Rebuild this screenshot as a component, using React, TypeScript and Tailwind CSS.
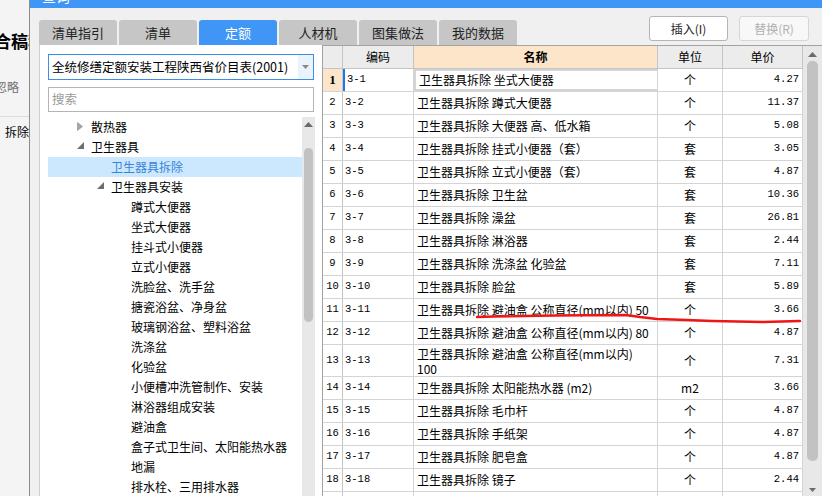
import React from 'react';

type Row = { code: string; name: React.ReactNode; unit: string; price: string; tall?: boolean };

const rows: Row[] = [
  { code: '3-1', name: '卫生器具拆除 坐式大便器', unit: '个', price: '4.27' },
  { code: '3-2', name: '卫生器具拆除 蹲式大便器', unit: '个', price: '11.37' },
  { code: '3-3', name: '卫生器具拆除 大便器 高、低水箱', unit: '个', price: '5.08' },
  { code: '3-4', name: '卫生器具拆除 挂式小便器（套）', unit: '套', price: '3.05' },
  { code: '3-5', name: '卫生器具拆除 立式小便器（套）', unit: '套', price: '4.87' },
  { code: '3-6', name: '卫生器具拆除 卫生盆', unit: '套', price: '10.36' },
  { code: '3-7', name: '卫生器具拆除 澡盆', unit: '套', price: '26.81' },
  { code: '3-8', name: '卫生器具拆除 淋浴器', unit: '套', price: '2.44' },
  { code: '3-9', name: '卫生器具拆除 洗涤盆 化验盆', unit: '套', price: '7.11' },
  { code: '3-10', name: '卫生器具拆除 脸盆', unit: '套', price: '5.89' },
  { code: '3-11', name: '卫生器具拆除 避油盒 公称直径(mm以内) 50', unit: '个', price: '3.66' },
  { code: '3-12', name: '卫生器具拆除 避油盒 公称直径(mm以内) 80', unit: '个', price: '4.87' },
  {
    code: '3-13',
    name: (
      <>
        卫生器具拆除 避油盒 公称直径(mm以内)
        <br />
        100
      </>
    ),
    unit: '个',
    price: '7.31',
    tall: true,
  },
  { code: '3-14', name: '卫生器具拆除 太阳能热水器 (m2)', unit: 'm2', price: '3.66' },
  { code: '3-15', name: '卫生器具拆除 毛巾杆', unit: '个', price: '4.87' },
  { code: '3-16', name: '卫生器具拆除 手纸架', unit: '个', price: '4.87' },
  { code: '3-17', name: '卫生器具拆除 肥皂盒', unit: '个', price: '4.87' },
  { code: '3-18', name: '卫生器具拆除 镜子', unit: '个', price: '2.44' },
  { code: '', name: '', unit: '', price: '' },
];

type TreeItem = { label: string; level: 0 | 1 | 2; arrow?: 'closed' | 'open'; selected?: boolean };

const tree: TreeItem[] = [
  { label: '散热器', level: 0, arrow: 'closed' },
  { label: '卫生器具', level: 0, arrow: 'open' },
  { label: '卫生器具拆除', level: 1, selected: true },
  { label: '卫生器具安装', level: 1, arrow: 'open' },
  { label: '蹲式大便器', level: 2 },
  { label: '坐式大便器', level: 2 },
  { label: '挂斗式小便器', level: 2 },
  { label: '立式小便器', level: 2 },
  { label: '洗脸盆、洗手盆', level: 2 },
  { label: '搪瓷浴盆、净身盆', level: 2 },
  { label: '玻璃钢浴盆、塑料浴盆', level: 2 },
  { label: '洗涤盆', level: 2 },
  { label: '化验盆', level: 2 },
  { label: '小便槽冲洗管制作、安装', level: 2 },
  { label: '淋浴器组成安装', level: 2 },
  { label: '避油盒', level: 2 },
  { label: '盒子式卫生间、太阳能热水器', level: 2 },
  { label: '地漏', level: 2 },
  { label: '排水栓、三用排水器', level: 2 },
];

const tabs = ['清单指引', '清单', '定额', '人材机', '图集做法', '我的数据'];

const UpArrow = () => (
  <svg width="9" height="5" viewBox="0 0 9 5">
    <path d="M0 5 L4.5 0 L9 5 Z" fill="#6b6b6b" />
  </svg>
);

const DownArrow = ({ color = '#6b6b6b' }: { color?: string }) => (
  <svg width="7" height="4" viewBox="0 0 7 4">
    <path d="M0 0 L7 0 L3.5 4 Z" fill={color} />
  </svg>
);

const TreeArrow = ({ kind }: { kind: 'closed' | 'open' }) =>
  kind === 'closed' ? (
    <svg width="6" height="9" viewBox="0 0 6 9">
      <path d="M0.5 0.5 L5.5 4.5 L0.5 8.5 Z" fill="#a6a6a6" stroke="#8a8a8a" strokeWidth="0.6" />
    </svg>
  ) : (
    <svg width="7" height="7" viewBox="0 0 7 7">
      <path d="M7 0 L7 7 L0 7 Z" fill="#6e6e6e" />
    </svg>
  );

const BackPage = () => (
  <div className="flex w-[29px] shrink-0 flex-col overflow-hidden">
    <div className="mt-[31px] -ml-[6px] whitespace-nowrap text-[17px] font-bold leading-[20px]">合稿程</div>
    <div className="mt-[29px] -ml-[5px] whitespace-nowrap text-[12px] leading-[14px] text-[#707070]">忽略</div>
    <div className="mt-[22px] flex-1 border-t border-[#dcdcdc]">
      <div className="mt-[8px] flex items-center whitespace-nowrap">
        <span className="-ml-[7px] h-[10px] w-[10px] border border-[#444]" />
        <span className="ml-[6px] text-[12px] leading-[14px]">拆除</span>
      </div>
    </div>
  </div>
);

export default function App() {
  return (
    <div className="relative flex h-[496px] w-[822px] overflow-hidden bg-[#f4f4f4] font-['Noto_Sans_CJK_SC',sans-serif] text-[12px] text-black">
      <BackPage />
      <div className="w-px shrink-0 bg-[#8c8c8c]" />
      <div className="flex min-w-0 flex-1 flex-col bg-[#f0f0f0]">
        {/* title bar, mostly scrolled off the top */}
        <div className="h-[8px] shrink-0 overflow-hidden bg-[#3f96f6]">
          <div className="-mt-[12px] ml-[12px] text-[14px] leading-[16px] text-white">查询</div>
        </div>

        {/* tabs + buttons */}
        <div className="flex h-[37px] shrink-0 pl-[9px]">
          <div className="flex items-end gap-[2px]">
            {tabs.map((t) => (
              <div
                key={t}
                className={`flex h-[25px] w-[78px] items-center justify-center rounded-t-[3px] text-[13px] leading-[16px] ${
                  t === '定额' ? 'bg-[#3f96f6] text-white' : 'bg-[#c6c6c6] text-[#222]'
                }`}
              >
                {t}
              </div>
            ))}
          </div>
          <div className="ml-auto mr-[13px] mt-[8px] flex gap-[11px]">
            <div className="flex h-[25px] w-[79px] items-center justify-center rounded-[3px] border border-[#b5b5b5] bg-white text-[12px] text-[#222]">
              插入(I)
            </div>
            <div className="flex h-[25px] w-[70px] items-center justify-center rounded-[3px] border border-[#d6d6d6] bg-[#f8f8f8] text-[12px] text-[#b0b0b0]">
              替换(R)
            </div>
          </div>
        </div>

        {/* content */}
        <div className="ml-[9px] flex min-h-0 flex-1 border-l border-[#cfcfcf] bg-white">
          {/* left panel */}
          <div className="flex w-[275px] shrink-0 flex-col pl-[8px] pt-[9px]">
            <div className="flex h-[26px] w-[266px] items-center border border-[#3d8ee8] bg-white">
              <span className="flex-1 whitespace-nowrap pl-[3px] text-[12.5px] leading-[16px]">全统修缮定额安装工程陕西省价目表(2001)</span>
              <span className="flex h-full w-[15px] items-center justify-center bg-[#eaf2fc]">
                <DownArrow color="#8a8a8a" />
              </span>
            </div>
            <div className="mt-[7px] flex h-[25px] w-[266px] items-center border border-[#b4b4b4] bg-white pl-[3px] text-[12.5px] text-[#9a9a9a]">
              搜索
            </div>
            <div className="mt-[5px] flex min-h-0 flex-1">
              <ul className="w-[254px] overflow-hidden">
                {tree.map((item) => {
                  const textPad = item.level === 0 ? 'pl-[43px]' : item.level === 1 ? 'pl-[63px]' : 'pl-[83px]';
                  const arrowPos = item.level === 0 ? 'left-[29px]' : 'left-[49px]';
                  return (
                    <li
                      key={item.label}
                      className={`relative flex h-[20px] items-center whitespace-nowrap text-[12px] leading-[14px] ${textPad} ${
                        item.selected ? 'bg-[#cce8ff] text-[#3784d6]' : ''
                      }`}
                    >
                      {item.arrow && (
                        <span className={`absolute top-[5px] ${arrowPos}`}>
                          <TreeArrow kind={item.arrow} />
                        </span>
                      )}
                      {item.label}
                    </li>
                  );
                })}
              </ul>
              <div className="flex w-[13px] flex-col items-center bg-[#e8e8e8]">
                <div className="mt-[3px] flex h-[8px] items-center">
                  <UpArrow />
                </div>
                <div className="mt-[20px] h-[174px] w-[9px] rounded-[5px] bg-[#c2c2c2]" />
              </div>
            </div>
          </div>

          {/* table */}
          <div className="ml-[7px] flex min-w-0 flex-1 border-l border-t border-[#a3a3a3]">
            <div className="flex w-[480px] shrink-0 flex-col">
              <div className="flex h-[23px] shrink-0 border-b border-[#c4c4c4] bg-[#ececec] text-[12px]">
                <div className="w-[20px] border-r border-[#c4c4c4]" />
                <div className="flex w-[71px] items-center justify-center border-r border-[#c4c4c4]">编码</div>
                <div className="flex w-[244px] items-center justify-center border-r border-[#c4c4c4] bg-[#fde5c9] font-bold">名称</div>
                <div className="flex w-[65px] items-center justify-center border-r border-[#c4c4c4]">单位</div>
                <div className="flex w-[80px] items-center justify-center border-r border-[#c4c4c4]">单价</div>
              </div>
              {rows.map((r, i) => {
                const first = i === 0;
                return (
                  <div
                    key={i}
                    className={`flex shrink-0 border-b border-[#d4d4d4] ${r.tall ? 'h-[32px]' : 'h-[23px]'}`}
                  >
                    <div
                      className={`flex w-[20px] items-center justify-center border-r border-[#c4c4c4] ${
                        first
                          ? "bg-[#fde5c9] font-['Liberation_Serif',serif] text-[13px] font-bold"
                          : "font-['Liberation_Mono',monospace] text-[10.5px]"
                      }`}
                    >
                      {r.code ? i + 1 : ''}
                    </div>
                    <div
                      className={`flex w-[71px] items-center border-r border-[#d4d4d4] pl-[2px] font-['Liberation_Mono',monospace] text-[10.5px] ${
                        first ? 'border-l-2 border-l-[#1a78f0] pl-0' : ''
                      }`}
                    >
                      {r.code}
                    </div>
                    <div
                      className={`flex w-[244px] items-center whitespace-nowrap border-r border-[#d4d4d4] pl-[3px] text-[12px] ${
                        r.tall ? 'leading-[15px]' : 'leading-[14px]'
                      } ${first ? 'border-2 border-[#777] pl-[2px]' : ''}`}
                    >
                      <span>{r.name}</span>
                    </div>
                    <div className="flex w-[65px] items-center justify-center border-r border-[#d4d4d4] text-[12px]">{r.unit}</div>
                    <div className="flex w-[80px] items-center justify-end border-r border-[#d4d4d4] pr-[3px] font-['Liberation_Mono',monospace] text-[10.5px]">
                      {r.price}
                    </div>
                  </div>
                );
              })}
            </div>
            <div className="flex w-[19px] shrink-0 flex-col items-center bg-[#e8e8e8]">
              <div className="mt-[5px] flex h-[6px] items-center">
                <UpArrow />
              </div>
              <div className="mt-[4px] h-[400px] w-[11px] rounded-[5px] bg-[#c2c2c2]" />
              <div className="mb-[4px] mt-auto">
                <DownArrow />
              </div>
            </div>
          </div>
        </div>
      </div>

      {/* red hand-drawn annotation */}
      <svg className="pointer-events-none absolute left-0 top-0" width="822" height="496" viewBox="0 0 822 496">
        <path
          d="M477 317 C 520 316, 590 315, 626 315 L 640 317 L 657 319 L 687 320 L 712 321 L 763 322 L 800 321"
          fill="none"
          stroke="#f01515"
          strokeWidth="2.4"
          strokeLinecap="round"
          strokeLinejoin="round"
        />
      </svg>
    </div>
  );
}
